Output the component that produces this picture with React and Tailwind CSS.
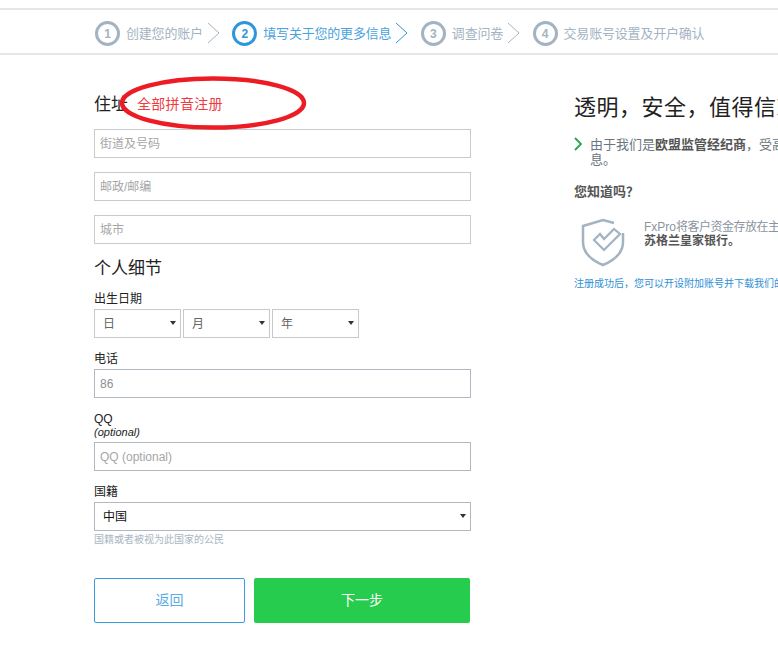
const FONT = "font-['Liberation_Sans','Noto_Sans_CJK_SC',sans-serif]";

const STEPS = [
  { n: 1, label: '创建您的账户', arrow: true },
  { n: 2, label: '填写关于您的更多信息', arrow: true, active: true },
  { n: 3, label: '调查问卷', arrow: true },
  { n: 4, label: '交易账号设置及开户确认' },
];

function Step({ step }) {
  const tone = step.active ? 'text-[#2f96dc]' : 'text-[#a3b3c2]';
  const ring = step.active ? 'border-[#2f96dc]' : 'border-[#a3b3c2]';
  return (
    <div className={`flex items-center ${tone}`}>
      <span className={`flex h-[25px] w-[25px] items-center justify-center rounded-full border-[3px] text-[12px] font-bold ${ring}`}>
        {step.n}
      </span>
      <span className={`ml-[6px] text-[13px] tracking-[-0.2px] whitespace-nowrap ${step.active ? 'text-[#4aa3e0]' : ''}`}>{step.label}</span>
      {step.arrow && (
        <svg width="13" height="24" viewBox="0 0 13 24" fill="none" stroke="currentColor" strokeWidth="1" className="mt-[-2px] ml-[4px]">
          <path d="M1 2l11 10L1 22" />
        </svg>
      )}
    </div>
  );
}

function TextField({ placeholder, defaultValue, light }) {
  return (
    <input
      type="text"
      placeholder={placeholder}
      defaultValue={defaultValue}
      className={`block h-[29px] w-[377px] border bg-white px-[5px] text-[12px] text-[#8a8f94] outline-none placeholder:text-[#a6a6a6] ${
        light ? 'border-[#c6cbd0]' : 'border-[#b0b9c2]'
      }`}
    />
  );
}

function Arrow() {
  return (
    <svg width="6" height="4" viewBox="0 0 6 4" className="pointer-events-none absolute top-[12px] right-[5px]">
      <path d="M0 0h6L3 4z" fill="#333" />
    </svg>
  );
}

function DateSelect({ label, width }) {
  return (
    <div className={`relative ${width}`}>
      <select className="h-[29px] w-full appearance-none border border-[#c9c9c9] bg-white pl-[8px] text-[12px] text-[#666] outline-none">
        <option>{label}</option>
      </select>
      <Arrow />
    </div>
  );
}

function ShieldIcon() {
  return (
    <svg width="56" height="54" viewBox="0 0 56 54" fill="none" stroke="#a3b3c2" strokeWidth="2.500" className="shrink-0">
      <path d="M38 7L27 4L7 10V26C7 36 15 44 27 49C39 44 47 36 47 26V17" />
      <path d="M18 24L24 18L28 23L38 13L44 18L28 34Z" strokeWidth="2.200" />
    </svg>
  );
}

export default function App() {
  return (
    <div className={`relative h-[651px] w-[778px] overflow-hidden bg-white text-[#222] ${FONT}`}>
      <div className="mt-[8px] flex h-[47px] items-center gap-[12.500px] border-y-2 border-[#e4e7ea] pt-[4px] pl-[95px]">
        {STEPS.map((s) => <Step key={s.n} step={s} />)}
      </div>

      <div className="flex pl-[94px]">
        <div className="w-[377px] shrink-0">
          <div className="relative mt-[38px] flex h-[24px] items-center">
            <h2 className="text-[17px] font-normal">住址</h2>
            <span className="mt-[-2px] ml-[9px] text-[14px] tracking-[0.3px] text-[#f03a3f]">全部拼音注册</span>
            <svg width="190" height="56" viewBox="0 0 190 56" fill="none" className="absolute top-[-17px] left-[24px]">
              <ellipse cx="95" cy="27" rx="91" ry="24.500" stroke="#ed1c24" strokeWidth="4.500" />
            </svg>
          </div>

          <div className="mt-[12px] flex flex-col gap-[14px]">
            <TextField placeholder="街道及号码" light />
            <TextField placeholder="邮政/邮编" light />
            <TextField placeholder="城市" light />
          </div>

          <h2 className="mt-[13px] text-[17px] leading-[24px] font-normal">个人细节</h2>

          <label className="mt-[11px] block text-[12px] leading-[14px]">出生日期</label>
          <div className="mt-[3px] flex gap-[2px]">
            <DateSelect label="日" width="w-[87px]" />
            <DateSelect label="月" width="w-[87px]" />
            <DateSelect label="年" width="w-[87px]" />
          </div>

          <label className="mt-[14px] mb-[3px] block text-[12px] leading-[14px]">电话</label>
          <TextField defaultValue="86" />

          <label className="mt-[15px] block text-[12px] leading-[13px]">QQ</label>
          <div className="mb-[3px] text-[11px] leading-[13px] italic">(optional)</div>
          <TextField placeholder="QQ (optional)" />

          <label className="mt-[14px] mb-[3px] block text-[12px] leading-[14px]">国籍</label>
          <div className="relative">
            <select className="h-[29px] w-full appearance-none border border-[#b0b9c2] bg-white pl-[8px] text-[12px] text-[#111] outline-none">
              <option>中国</option>
            </select>
            <Arrow />
          </div>
          <p className="mt-[2px] text-[10px] leading-[14px] text-[#a9b6c2]">国籍或者被视为此国家的公民</p>

          <div className="mt-[31px] flex gap-[9px]">
            <button className="h-[45px] w-[151px] rounded-[2px] border border-[#3a9ce0] bg-white text-[14px] text-[#5aaae6]">返回</button>
            <button className="h-[45px] w-[216px] rounded-[2px] bg-[#25cc4e] text-[14px] text-white">下一步</button>
          </div>
        </div>

        <aside className="ml-[103px] w-[500px] shrink-0">
          <h1 className="mt-[38px] text-[22px] leading-[30px] font-normal tracking-[0.5px] whitespace-nowrap">透明，安全，值得信赖</h1>
          <div className="mt-[14px] flex text-[13px] leading-[15px] text-[#6b7680]">
            <svg width="8" height="14" viewBox="0 0 8 14" fill="none" stroke="#23a64a" strokeWidth="1.800" className="shrink-0">
              <path d="M1 1l6 6-6 6" />
            </svg>
            <p className="ml-[8px]">
              <span className="whitespace-nowrap">由于我们是<b className="text-[#555]">欧盟监管经纪商</b>，受高度监管</span>
              <br />息。
            </p>
          </div>
          <h3 className="mt-[16px] text-[13px] leading-[18px] font-bold text-[#555]">您知道吗？</h3>
          <div className="mt-[15px] ml-[2px] flex">
            <ShieldIcon />
            <p className="mt-[4px] ml-[12px] text-[12px] leading-[14px] whitespace-nowrap text-[#8a949e]">
              FxPro<span className="tracking-[-0.5px]">将客户资金存放在主要银行</span>
              <br /><b className="text-[#555]">苏格兰皇家银行。</b>
            </p>
          </div>
          <p className="mt-[7px] text-[10px] leading-[14px] whitespace-nowrap text-[#2f8fd6]">注册成功后，您可以开设附加账号并下载我们的软件</p>
        </aside>
      </div>
    </div>
  );
}
